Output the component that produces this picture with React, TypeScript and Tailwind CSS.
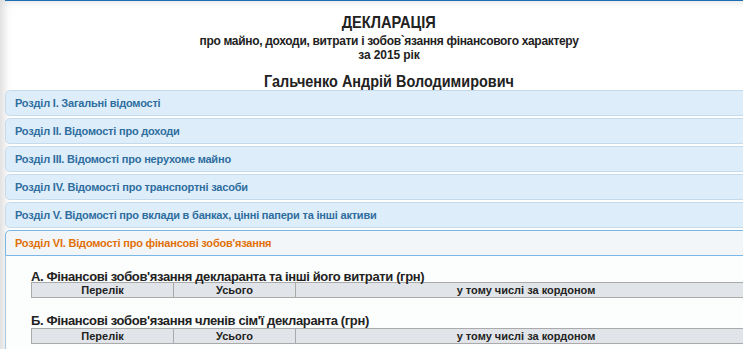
import type { ReactNode } from "react"

const sections = [
  "Розділ I. Загальні відомості",
  "Розділ II. Відомості про доходи",
  "Розділ III. Відомості про нерухоме майно",
  "Розділ IV. Відомості про транспортні засоби",
  "Розділ V. Відомості про вклади в банках, цінні папери та інші активи",
]

function HeaderTable() {
  return (
    <table className="w-[726px] border-collapse text-[11px] font-bold text-[#222]">
      <thead>
        <tr className="bg-[#e1e5e9]">
          <th className="h-[15px] w-[142px] border border-[#aaaaaa] p-0 font-bold leading-[13px]">Перелік</th>
          <th className="h-[15px] w-[122px] border border-[#aaaaaa] p-0 font-bold leading-[13px]">Усього</th>
          <th className="h-[15px] border border-[#aaaaaa] p-0 font-bold leading-[13px]">у тому числі за кордоном</th>
        </tr>
      </thead>
    </table>
  )
}

function Header({ children, active }: { children: ReactNode; active?: boolean }) {
  return (
    <div
      className={
        active
          ? "flex h-[26px] items-center rounded-t-[5px] border border-[#79b7e7] bg-[#f3f6f8] pl-[9px] text-[11px] font-bold tracking-[-0.2px] text-[#e17009]"
          : "flex h-[26px] items-center rounded-[5px] border border-[#c5dbec] bg-[#deedfa] pl-[9px] text-[11px] font-bold tracking-[-0.2px] text-[#2e6e9e]"
      }
    >
      {children}
    </div>
  )
}

export default function App() {
  return (
    <div
      className="h-[349px] w-[743px] overflow-hidden bg-white shadow-[inset_9px_6px_8px_-5px_rgba(0,0,0,0.14)]"
      style={{ fontFamily: '"Liberation Sans", Arial, sans-serif' }}
    >
      <div className="ml-[5px] h-[1px] bg-[#1b6fb4]" />
      <div className="w-[773px] pl-[5px]">
        <div className="pt-[12px] text-center text-[#222]">
          <div className="flex h-[20px] justify-center">
            <span className="inline-block scale-x-[0.86] whitespace-nowrap text-[17px] font-bold leading-[20px]">
              ДЕКЛАРАЦІЯ
            </span>
          </div>
          <div className="mt-[1px] text-[12px] font-bold leading-[14px] tracking-[-0.32px]">
            про майно, доходи, витрати і зобов`язання фінансового характеру
          </div>
          <div className="text-[12px] font-bold leading-[14px] tracking-[-0.1px]">за 2015 рік</div>
          <div className="mt-[12px] flex h-[16px] justify-center">
            <span className="inline-block scale-x-[0.85] whitespace-nowrap text-[17px] font-bold leading-[16px]">
              Гальченко Андрій Володимирович
            </span>
          </div>
        </div>
        <div className="flex w-[768px] flex-col gap-[2px]">
          {sections.map((s) => (
            <Header key={s}>{s}</Header>
          ))}
          <div>
            <Header active>Розділ VI. Відомості про фінансові зобов'язання</Header>
            <div className="border-l border-[#a6c9e2] bg-[#fcfdfd] pl-[25px] pt-[14px] text-[#222]">
              <div className="text-[13px] font-bold leading-[14px] tracking-[-0.37px]">
                А. Фінансові зобов'язання декларанта та інші його витрати (грн)
              </div>
              <div className="-mt-[2px]">
                <HeaderTable />
              </div>
              <div className="mt-[16px] text-[13px] font-bold leading-[14px] tracking-[-0.37px]">
                Б. Фінансові зобов'язання членів сім'ї декларанта (грн)
              </div>
              <HeaderTable />
              <div className="h-[20px]" />
            </div>
          </div>
        </div>
      </div>
    </div>
  )
}
